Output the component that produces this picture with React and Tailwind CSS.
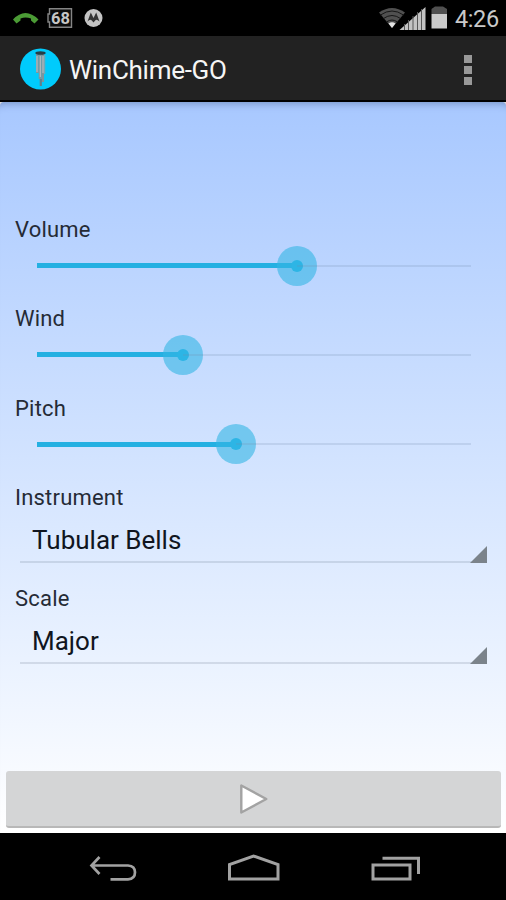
import React from 'react';

function StatusBar() {
  return (
    <div className="flex h-9 shrink-0 items-center justify-between bg-black">
      <svg width="110" height="36" viewBox="0 0 110 36">
        <path d="M13 19.5Q19 13 25.5 13Q32 13 38.500 19.500L34.500 23.500L31 20.500V18.500Q25.500 16.500 20.500 18.500V20.500L16.500 23.500Z" fill="#4b9b35" />
        <path d="M49.500 8.800H71.500V27.200H49.500V22H48V14H49.500Z" fill="#0c0c0c" stroke="#858585" strokeWidth="1.400" />
        <text x="60.500" y="24" textAnchor="middle" fontSize="16.500" fontWeight="700" fontFamily="Roboto, sans-serif" fill="#c6c6c6">68</text>
        <circle cx="93.500" cy="18" r="9" fill="#c4c4c4" />
        <path d="M87.500 21.500L90.800 12.500L93.500 18L96.200 12.500L99.500 21.500Q96.500 18.500 95.200 20.500L93.500 22.500L91.800 20.500Q90 18.500 87.500 21.500Z" fill="#333" />
      </svg>
      <div className="flex items-center">
        <svg width="76" height="36" viewBox="378 0 76 36">
          <path d="M379 12.500Q392 3.500 405 12.500L392 28Z" fill="#505050" />
          <g fill="none" stroke="#161616" strokeWidth="1">
            <path d="M380.500 15Q392 7 403.500 15" />
            <path d="M383.500 18.500Q392 12.500 400.500 18.500" />
            <path d="M386.500 22Q392 18 397.500 22" />
          </g>
          <path d="M388.500 23.500Q392 21 395.500 23.500L392 28Z" fill="#e4e4e4" />
          <path d="M399.500 30L425.500 7V30Z" fill="#c2c2c2" />
          <path d="M404.500 24V30M408.500 20V30M413 16V30M417.500 12V30M421.500 9V30" stroke="#555" strokeWidth="1" />
          <path d="M431.500 14V9L435 6.500H443L447 9V14Z" fill="#505050" />
          <path d="M431.500 14H447V28.500H431.500Z" fill="#cacaca" />
        </svg>
        <span className="w-[52px] pl-px pt-px text-[23.500px] leading-9 tracking-[-0.4px] text-[#c9c9c9]">4:26</span>
      </div>
    </div>
  );
}

function ActionBar() {
  return (
    <header className="flex h-[66px] shrink-0 items-center border-b-2 border-black bg-[#222] pl-5 pr-[34px]">
      <svg width="42" height="42" viewBox="0 0 42 42" className="mt-0.5">
        <circle cx="20.500" cy="21" r="20.500" fill="#00cbfc" />
        <path d="M17.300 6V25M20 6V31M22.700 6V34" stroke="#7d959d" strokeWidth="2.600" />
        <path d="M24.500 7V26" stroke="#6fa9ba" strokeWidth="1.500" />
        <path d="M17 8V24M20.300 8V29M23 8V25" stroke="#b5bfc3" strokeWidth="1.100" />
        <path d="M20.800 31V38" stroke="#60818d" strokeWidth="2.200" />
        <ellipse cx="20.500" cy="5" rx="5.200" ry="1.800" fill="#243d46" />
      </svg>
      <h1 className="pl-[7px] pt-1 text-[26px] leading-8 tracking-[-0.28px] text-[#f5f5f5]">WinChime-GO</h1>
      <div className="ml-auto flex flex-col gap-[3px] pt-[3px]">
        <span className="size-2 bg-[#999]" />
        <span className="size-2 bg-[#999]" />
        <span className="size-2 bg-[#999]" />
      </div>
    </header>
  );
}

function Label({ children }) {
  return <div className="h-[30px] pl-[15px] text-[22px] leading-[31.5px] tracking-[0.2px] text-[#252b36]">{children}</div>;
}

function SliderRow({ label, value }) {
  return (
    <div className="h-[89.330px]">
      <Label>{label}</Label>
      <div className="flex h-[43px] items-center pl-[37px] pr-[35px]">
        <div className="flex h-[5px] items-center bg-[#24b0e2]" style={{ width: value }}>
          <div className="-mr-5 ml-auto flex size-10 shrink-0 items-center justify-center rounded-full bg-[#33b5e5]/60">
            <div className="size-3 rounded-full bg-[#2db5e5]" />
          </div>
        </div>
        <div className="h-0.5 flex-1 bg-[#748ba8]/20" />
      </div>
    </div>
  );
}

function SpinnerRow({ label, value }) {
  return (
    <div className="h-[101px]">
      <Label>{label}</Label>
      <div className="relative ml-5 mr-[19px] h-[51px] border-b-2 border-[#69798c]/20 pl-3 text-[26px] leading-[56px] text-[#101520]">
        {value}
        <svg className="absolute -bottom-0.5 right-0" width="17" height="17" viewBox="0 0 17 17">
          <path d="M17 0V17H0Z" fill="#7b838b" />
        </svg>
      </div>
    </div>
  );
}

function NavBar() {
  return (
    <nav className="flex h-[67px] shrink-0 items-center justify-between bg-black pl-[88px] pr-[84px] pt-[3px]">
      <svg width="50" height="32" viewBox="88 852 50 32" fill="none" stroke="#a2a2a2" strokeWidth="2.700">
        <path d="M99.500 857L91.500 865.500L99.500 874M92 865.500H128Q135 866 135 872.300Q135 879 128 879.300H110.500" />
      </svg>
      <svg width="54" height="32" viewBox="227 852 54 32" fill="none" stroke="#a2a2a2" strokeWidth="3">
        <path d="M229.500 879V864.500L253.500 856L278 864.500V879Z" />
      </svg>
      <svg width="52" height="32" viewBox="370 852 52 32" fill="none" stroke="#a2a2a2" strokeWidth="3">
        <path d="M373 865H410V879H373ZM382.500 858.300H418.500V874" />
      </svg>
    </nav>
  );
}

export default function App() {
  return (
    <div className="flex h-[900px] w-[506px] flex-col overflow-hidden bg-black font-[Roboto,sans-serif]">
      <StatusBar />
      <ActionBar />
      <div className="flex min-h-0 flex-1 flex-col bg-[#dcdcdc]">
        <main className="flex min-h-0 flex-1 flex-col rounded-t-[4px] bg-linear-to-b from-[#a8c8ff] to-white pt-28 shadow-[inset_0_10px_8px_-9px_rgba(30,50,90,0.4)]">
          <SliderRow label="Volume" value="259.500px" />
          <SliderRow label="Wind" value="146px" />
          <SliderRow label="Pitch" value="199px" />
          <SpinnerRow label="Instrument" value="Tubular Bells" />
          <SpinnerRow label="Scale" value="Major" />
          <button className="mb-[5px] ml-1.5 mr-[5px] mt-auto flex h-[57px] shrink-0 items-center justify-center rounded-[3px] border-b-2 border-[#b8b8b8] bg-[#d4d5d6]">
            <svg width="30" height="32" viewBox="0.7 0 30 32">
              <path d="M3 2.500V29.500L28 16Z" fill="white" stroke="#a3a3a3" strokeWidth="2.400" strokeLinejoin="round" />
            </svg>
          </button>
        </main>
      </div>
      <NavBar />
    </div>
  );
}
